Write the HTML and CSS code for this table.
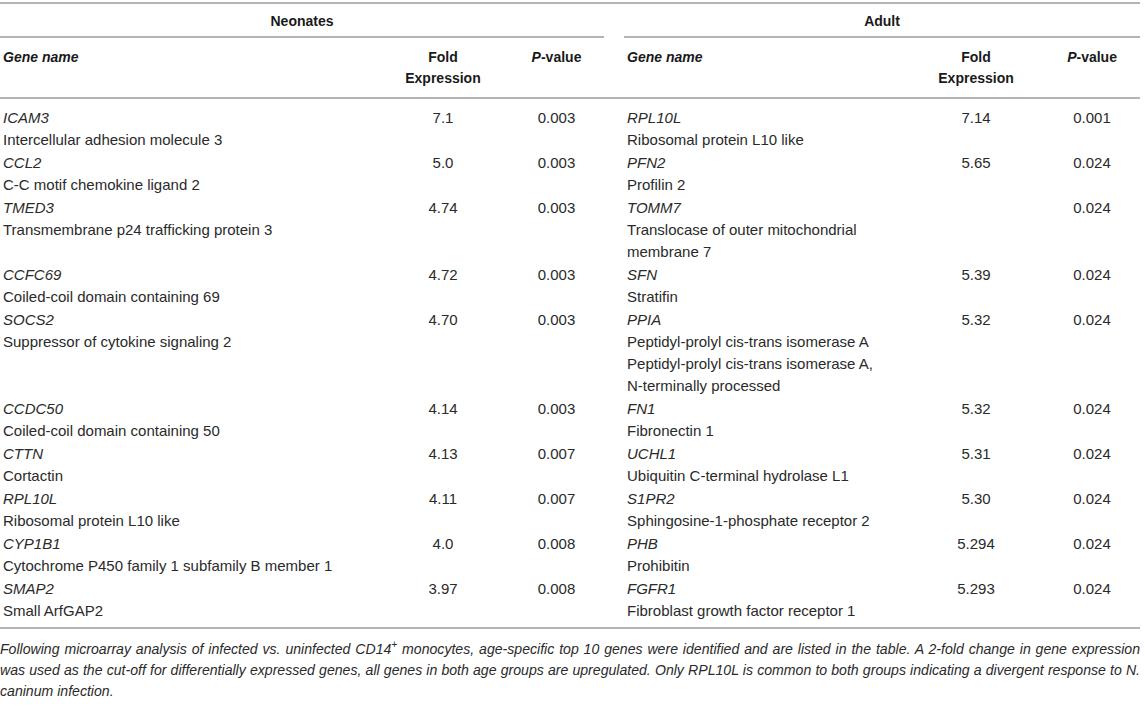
FILE: index.html
```html
<!DOCTYPE html>
<html lang="en">
<head>
<meta charset="utf-8">
<title>Age-specific top 10 genes</title>
<link rel="stylesheet" href="styles.css">
</head>
<body>
<div class="page">
  <table class="genes">
    <colgroup>
      <col class="c-gene-n">
      <col class="c-fold-n">
      <col class="c-p-n">
      <col class="c-gap">
      <col class="c-gene-a">
      <col class="c-fold-a">
      <col class="c-p-a">
    </colgroup>
    <thead>
      <tr class="group-row">
        <th colspan="3" class="group">Neonates</th>
        <th class="gap"></th>
        <th colspan="3" class="group">Adult</th>
      </tr>
      <tr class="head-row">
        <th class="gene"><i>Gene name</i></th>
        <th class="fold">Fold<br>Expression</th>
        <th class="pval"><i>P</i>-value</th>
        <th class="gap"></th>
        <th class="gene"><i>Gene name</i></th>
        <th class="fold">Fold<br>Expression</th>
        <th class="pval"><i>P</i>-value</th>
      </tr>
    </thead>
    <tbody>
      <tr class="first">
        <td class="gene"><i>ICAM3</i><br>Intercellular adhesion molecule 3</td>
        <td class="fold">7.1</td>
        <td class="pval">0.003</td>
        <td class="gap"></td>
        <td class="gene"><i>RPL10L</i><br>Ribosomal protein L10 like</td>
        <td class="fold">7.14</td>
        <td class="pval">0.001</td>
      </tr>
      <tr>
        <td class="gene"><i>CCL2</i><br>C-C motif chemokine ligand 2</td>
        <td class="fold">5.0</td>
        <td class="pval">0.003</td>
        <td class="gap"></td>
        <td class="gene"><i>PFN2</i><br>Profilin 2</td>
        <td class="fold">5.65</td>
        <td class="pval">0.024</td>
      </tr>
      <tr>
        <td class="gene"><i>TMED3</i><br>Transmembrane p24 trafficking protein 3</td>
        <td class="fold">4.74</td>
        <td class="pval">0.003</td>
        <td class="gap"></td>
        <td class="gene"><i>TOMM7</i><br>Translocase of outer mitochondrial<br>membrane 7</td>
        <td class="fold"></td>
        <td class="pval">0.024</td>
      </tr>
      <tr>
        <td class="gene"><i>CCFC69</i><br>Coiled-coil domain containing 69</td>
        <td class="fold">4.72</td>
        <td class="pval">0.003</td>
        <td class="gap"></td>
        <td class="gene"><i>SFN</i><br>Stratifin</td>
        <td class="fold">5.39</td>
        <td class="pval">0.024</td>
      </tr>
      <tr>
        <td class="gene"><i>SOCS2</i><br>Suppressor of cytokine signaling 2</td>
        <td class="fold">4.70</td>
        <td class="pval">0.003</td>
        <td class="gap"></td>
        <td class="gene"><i>PPIA</i><br>Peptidyl-prolyl cis-trans isomerase A<br>Peptidyl-prolyl cis-trans isomerase A,<br>N-terminally processed</td>
        <td class="fold">5.32</td>
        <td class="pval">0.024</td>
      </tr>
      <tr>
        <td class="gene"><i>CCDC50</i><br>Coiled-coil domain containing 50</td>
        <td class="fold">4.14</td>
        <td class="pval">0.003</td>
        <td class="gap"></td>
        <td class="gene"><i>FN1</i><br>Fibronectin 1</td>
        <td class="fold">5.32</td>
        <td class="pval">0.024</td>
      </tr>
      <tr>
        <td class="gene"><i>CTTN</i><br>Cortactin</td>
        <td class="fold">4.13</td>
        <td class="pval">0.007</td>
        <td class="gap"></td>
        <td class="gene"><i>UCHL1</i><br>Ubiquitin C-terminal hydrolase L1</td>
        <td class="fold">5.31</td>
        <td class="pval">0.024</td>
      </tr>
      <tr>
        <td class="gene"><i>RPL10L</i><br>Ribosomal protein L10 like</td>
        <td class="fold">4.11</td>
        <td class="pval">0.007</td>
        <td class="gap"></td>
        <td class="gene"><i>S1PR2</i><br>Sphingosine-1-phosphate receptor 2</td>
        <td class="fold">5.30</td>
        <td class="pval">0.024</td>
      </tr>
      <tr>
        <td class="gene"><i>CYP1B1</i><br>Cytochrome P450 family 1 subfamily B member 1</td>
        <td class="fold">4.0</td>
        <td class="pval">0.008</td>
        <td class="gap"></td>
        <td class="gene"><i>PHB</i><br>Prohibitin</td>
        <td class="fold">5.294</td>
        <td class="pval">0.024</td>
      </tr>
      <tr class="last">
        <td class="gene"><i>SMAP2</i><br>Small ArfGAP2</td>
        <td class="fold">3.97</td>
        <td class="pval">0.008</td>
        <td class="gap"></td>
        <td class="gene"><i>FGFR1</i><br>Fibroblast growth factor receptor 1</td>
        <td class="fold">5.293</td>
        <td class="pval">0.024</td>
      </tr>
    </tbody>
  </table>
  <p class="caption"><span class="cap-line">Following microarray analysis of infected vs. uninfected CD14<sup>+</sup> monocytes, age-specific top 10 genes were identified and are listed in the table. A 2-fold change in gene expression</span> <span class="cap-line">was used as the cut-off for differentially expressed genes, all genes in both age groups are upregulated. Only RPL10L is common to both groups indicating a divergent response to N.</span> <span class="cap-end">caninum infection.</span></p>
</div>
</body>
</html>
```

FILE: styles.css
```css
html, body {
  margin: 0;
  padding: 0;
  background: #ffffff;
}

body {
  font-family: "Liberation Sans", Arial, Helvetica, sans-serif;
  font-size: 15px;
  line-height: 22px;
  color: #2a2a2a;
}

.page {
  width: 1140px;
  padding-top: 2px;
}

.genes {
  width: 1140px;
  border-collapse: collapse;
  table-layout: fixed;
  border-top: 2px solid #b4b4b4;
}

.c-gene-n { width: 395px; }
.c-fold-n { width: 96px; }
.c-p-n { width: 113px; }
.c-gap { width: 20px; }
.c-gene-a { width: 302px; }
.c-fold-a { width: 100px; }
.c-p-a { width: 114px; }

.genes th,
.genes td {
  padding: 0;
  vertical-align: top;
}

.genes th {
  font-size: 14px;
  line-height: 21px;
  font-weight: bold;
  color: #1a1a1a;
}

.group-row th {
  padding-top: 7px;
  padding-bottom: 4px;
  text-align: center;
}

.group-row th.group {
  border-bottom: 2px solid #b4b4b4;
}

.head-row th {
  padding-top: 9px;
  padding-bottom: 8px;
  border-bottom: 2px solid #b4b4b4;
}

.genes .gene {
  text-align: left;
  padding-left: 3px;
}

.genes .fold {
  text-align: center;
}

.genes .pval {
  text-align: center;
  padding-left: 18px;
}

.genes tbody td {
  padding-top: 1px;
  padding-bottom: 0;
}

.genes tbody tr.first td {
  padding-top: 8px;
}

.genes tbody tr.last td {
  padding-bottom: 5px;
  border-bottom: 2px solid #b4b4b4;
}

.genes tbody td.gene {
  padding-left: 3px;
}

.caption {
  margin: 0;
  padding-top: 10px;
  font-size: 14.1px;
  line-height: 21px;
  font-style: italic;
  color: #2a2a2a;
}

.cap-line {
  display: block;
  text-align: justify;
  text-align-last: justify;
}

.cap-end {
  display: block;
  text-align: left;
}

.caption sup {
  font-size: 10px;
  line-height: 0;
  vertical-align: 6px;
  font-style: normal;
}
```
